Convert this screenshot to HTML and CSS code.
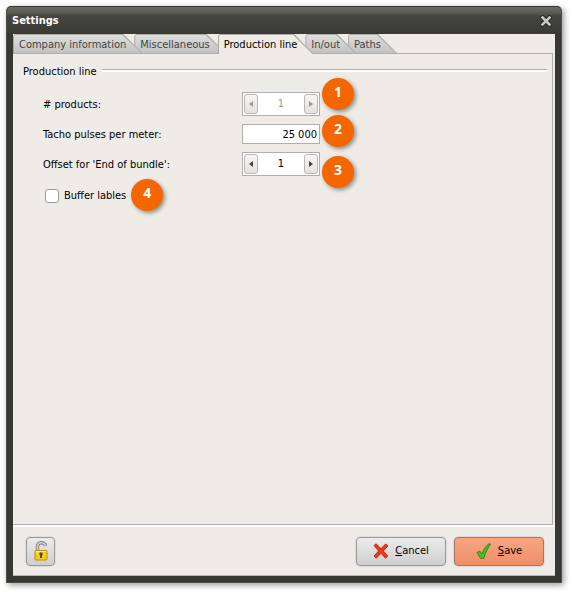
FILE: index.html
```html
<!DOCTYPE html>
<html lang="en">
  <head>
    <meta charset="UTF-8" />
    <title>Settings</title>
    <link rel="stylesheet" href="styles.css">
  </head>
  <body>
    <main class="window">
      <header class="titlebar">
        <h1>Settings</h1>
        <button type="button" class="close" aria-label="Close">
          <svg width="12" height="12" viewBox="0 0 12 12">
            <path d="M2.5 2.5 9.5 9.5M9.5 2.5 2.5 9.5" stroke="#22221f" stroke-width="4.4" stroke-linecap="square" />
            <path d="M2.5 2.5 9.5 9.5M9.5 2.5 2.5 9.5" stroke="#c9c8c4" stroke-width="2.6" stroke-linecap="square" />
          </svg>
        </button>
      </header>
      <form class="content" autocomplete="off">
        <nav class="tabs" role="tablist">
          <button type="button" role="tab" class="tab"><span>Company information</span></button>
          <button type="button" role="tab" class="tab"><span>Miscellaneous</span></button>
          <button type="button" role="tab" class="tab active" aria-selected="true"><span>Production line</span></button>
          <button type="button" role="tab" class="tab"><span>In/out</span></button>
          <button type="button" role="tab" class="tab"><span>Paths</span></button>
        </nav>
        <section class="panel">
          <h2>Production line</h2>
          <div class="row">
            <label for="products"># products:</label>
            <div class="field">
              <div class="spinner">
                <button type="button" disabled aria-label="Less"><svg width="4" height="6"><path d="M4 0v6L0 3z" /></svg></button>
                <input type="text" id="products" value="1" disabled />
                <button type="button" disabled aria-label="More"><svg width="4" height="6"><path d="M0 0v6l4-3z" /></svg></button>
              </div>
              <span class="badge badge-high">1</span>
            </div>
          </div>
          <div class="row">
            <label for="pulses">Tacho pulses per meter:</label>
            <div class="field">
              <input type="text" class="number" id="pulses" value="25 000" />
              <span class="badge">2</span>
            </div>
          </div>
          <div class="row">
            <label for="offset">Offset for 'End of bundle':</label>
            <div class="field">
              <div class="spinner">
                <button type="button" aria-label="Less"><svg width="4" height="6"><path d="M4 0v6L0 3z" /></svg></button>
                <input type="text" id="offset" value="1" />
                <button type="button" aria-label="More"><svg width="4" height="6"><path d="M0 0v6l4-3z" /></svg></button>
              </div>
              <span class="badge badge-low">3</span>
            </div>
          </div>
          <div class="check-row">
            <input type="checkbox" id="buffer" />
            <label for="buffer">Buffer lables</label>
            <span class="badge-inline">4</span>
          </div>
        </section>
        <footer>
          <button type="button" class="btn lock" aria-label="Unlock">
            <svg width="16" height="22" viewBox="0 0 16 22">
              <path d="M4.5 11V6.500c0-5 7-5 8-.5" fill="none" stroke="#808080" stroke-width="3.400" />
              <path d="M4.500 11V6.500c0-5 7-5 8-.5" fill="none" stroke="#d2d2d2" stroke-width="1.600" />
              <rect x="2" y="10.500" width="12" height="9.500" rx="1" fill="#f6cb18" stroke="#c68b05" />
              <path d="M3 11.500h10M3 13h2" stroke="#fff08a" />
              <circle cx="8" cy="14" r="1.700" fill="#41506a" />
              <path d="M7 14h2v4H7z" fill="#41506a" />
            </svg>
          </button>
          <div class="actions">
            <button type="button" class="btn cancel">
              <svg width="16" height="16" viewBox="0 0 16 16">
                <path d="M1 2.6 3 .7 8 5.6 12.6 1 15 2.8 10.3 8l4.5 5-2.3 2.3L8 10.3l-4.8 4.9L1 13l4.6-5z" fill="#f23512" stroke="#b5200a" stroke-width=".8" />
              </svg>
              <span><u>C</u>ancel</span>
            </button>
            <button type="button" class="btn save">
              <svg width="16" height="16" viewBox="0 0 16 16">
                <path d="M1 9.500 3.500 8l2.500 3C7.600 6.500 9.800 3 13 .7l1.600.3C11.500 5.300 9.300 10 7.700 15.300H4.600z" fill="#3cc820" stroke="#24780f" stroke-width=".8" />
              </svg>
              <span><u>S</u>ave</span>
            </button>
          </div>
        </footer>
      </form>
    </main>
  </body>
</html>
```

FILE: styles.css
```css
* {
  box-sizing: border-box;
}

body {
  margin: 0;
  padding: 6px 10px 10px 6px;
  height: 100vh;
  background-color: #fff;
  color: #000;
  font: 11px/16px "DejaVu Sans Condensed", "Open Sans", sans-serif;
}

button,
input {
  margin: 0;
  padding: 0;
  font: inherit;
  color: inherit;
}

.window {
  display: flex;
  flex-direction: column;
  height: 100%;
  padding: 0 6px 6px;
  border: 1px solid #4d4e49;
  border-top-color: #33342f;
  border-radius: 5px 5px 1px 1px;
  background-color: #373833;
  box-shadow: 2px 2px 6px rgba(0, 0, 0, 0.4);
}

.titlebar {
  display: flex;
  justify-content: space-between;
  align-items: center;
  height: 27px;
  margin: 0 -6px;
  padding: 0 9px 0 5px;
  border-radius: 4px 4px 0 0;
  background: linear-gradient(to bottom, #6b6d66, #55564f 7px, #474741 8px, #3a3934);
}

.titlebar h1 {
  margin: 0;
  font-size: 11px;
  font-weight: bold;
  color: #fff;
}

.close {
  display: flex;
  border: none;
  background: none;
}

.content {
  flex: 1;
  display: flex;
  flex-direction: column;
  background-color: #efebe6;
  border-bottom: 1px solid #b5b3af;
}

.tabs {
  display: flex;
  height: 20px;
}

/* slanted tabs, each one lies over the next */
.tab {
  position: relative;
  height: 19px;
  margin-right: -8px;
  padding: 2px 16px 0 6px;
  border: none;
  background-color: #aaa9a6;
  color: #444;
  white-space: nowrap;
  clip-path: polygon(0 2px, 2px 0, calc(100% - 19px) 0, 100% 100%, 0 100%);
}

.tab::before {
  content: "";
  position: absolute;
  inset: 1px 1px 0 1px;
  background: linear-gradient(to bottom, #dededd, #c2c2c2);
  clip-path: polygon(0 1px, 1px 0, calc(100% - 19px) 0, 100% 100%, 0 100%);
}

.tab span {
  position: relative;
}

.tab:nth-child(1) { z-index: 2; }
.tab:nth-child(2) { z-index: 1; }
.tab:nth-child(4) { z-index: 1; }

.tab.active {
  z-index: 3;
  height: 20px;
  color: #000;
}

.tab.active::before {
  background: #efebe6;
}

.panel {
  flex: 1;
  margin-top: -1px;
  margin-right: 2px;
  padding: 10px 5px 0 10px;
  border: 1px solid #b1afab;
  border-left: none;
}

.panel h2 {
  display: flex;
  align-items: center;
  gap: 5px;
  margin: 0 0 9px;
  font-size: 11px;
  font-weight: normal;
}

.panel h2::after {
  content: "";
  flex: 1;
  height: 2px;
  margin-bottom: 3px;
  border-top: 1px solid #b1afab;
  background-color: #fff;
}

.row {
  display: grid;
  grid-template-columns: 199px 78px;
  align-items: center;
  height: 30px;
  padding-left: 20px;
}

.row label {
  padding-top: 2px;
}

.field {
  position: relative;
}

.spinner {
  display: flex;
  height: 24px;
  padding: 1px;
  border: 1px solid #b1afab;
  background-color: #fff;
}

.spinner input {
  flex: 1;
  min-width: 0;
  border: none;
  background: none;
  text-align: center;
}

.spinner button {
  display: flex;
  align-items: center;
  justify-content: center;
  width: 14px;
  border: 1px solid #bab8b5;
  border-radius: 3px;
  background: linear-gradient(to bottom, #f7f6f5, #e4e2df);
  fill: #444;
}

.spinner input:disabled,
.spinner button:disabled {
  color: #999;
  fill: #999;
}

.number {
  display: block;
  width: 100%;
  height: 20px;
  padding: 0 2px;
  border: 1px solid #b1afab;
  background-color: #fff;
  text-align: right;
}

.badge,
.badge-inline {
  width: 32px;
  height: 32px;
  border-radius: 50%;
  background-color: #f46600;
  box-shadow: 2px 2px 4px rgba(0, 0, 0, 0.4);
  color: #fff;
  font: bold 14px/28px "Open Sans", sans-serif;
  text-align: center;
}

.badge {
  position: absolute;
  left: 80px;
  top: -9px;
}

.badge-high {
  top: -14px;
}

.badge-low {
  top: 4px;
}

.check-row {
  display: flex;
  align-items: center;
  height: 32px;
  padding-left: 22px;
}

.check-row input {
  appearance: none;
  width: 14px;
  height: 14px;
  margin-top: 2px;
  border: 1px solid #a09e9b;
  border-radius: 3px;
  background-color: #fff;
}

.check-row input:checked {
  background-color: #f46600;
}

.check-row label {
  margin: 2px 5px 0 5px;
}

footer {
  display: flex;
  justify-content: space-between;
  align-items: center;
  height: 50px;
  padding: 0 11px 0 13px;
  border-top: 2px solid #fff;
}

.actions {
  display: flex;
  gap: 8px;
}

.btn {
  display: flex;
  align-items: center;
  justify-content: center;
  gap: 6px;
  width: 90px;
  height: 29px;
  border: 1px solid #999;
  border-radius: 4px;
  background: linear-gradient(to bottom, #ebebeb, #cfcfcf);
  box-shadow: 0 0 1px 1px #e0dcd8;
}

.lock {
  width: 29px;
}

.save {
  border-color: #a0786a;
  background: linear-gradient(to bottom, #f9a582, #ef8e68);
}
```
